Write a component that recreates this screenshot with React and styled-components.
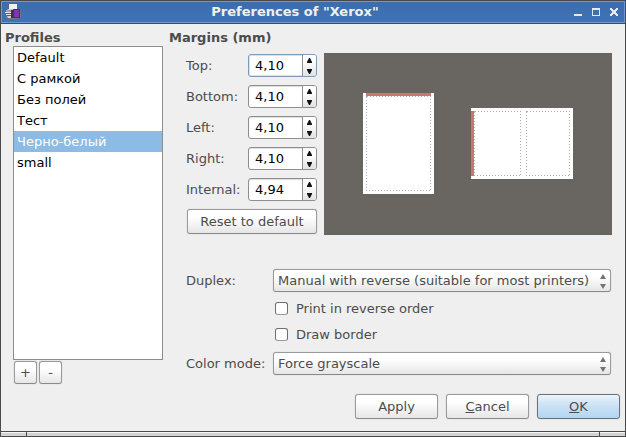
import React, { useState } from "react";
import styled, { createGlobalStyle, css } from "styled-components";

const GlobalStyle = createGlobalStyle`
  *, *::before, *::after { box-sizing: border-box; }
  body { margin: 0; }
  body, button, input, select {
    font-family: "DejaVu Sans", sans-serif;
    font-size: 13px;
    color: #4c4c4c;
  }
  button, input, select { margin: 0; padding: 0; }
`;

const Window = styled.div`
  display: flex;
  flex-direction: column;
  min-height: 100vh;
  background: #efefef;
  border: solid #4a4a4a;
  border-width: 0 1px;
`;

const TitleBar = styled.header`
  display: flex;
  align-items: center;
  height: 24px;
  padding: 0 2px 0 4px;
  background: linear-gradient(#3e6ca9, #4073ba);
  border: 1px solid #48494d;
  border-width: 1px 0;
  box-shadow: inset 0 0 0 1px #6b9bd0;

  & > svg { flex: none; }
`;

const Title = styled.h1`
  flex: 1;
  margin: 0;
  text-align: center;
  font-size: 13px;
  line-height: 16px;
  color: #f0f0f0;
`;

const WindowButton = styled.button`
  display: grid;
  place-items: center;
  width: 18px;
  height: 20px;
  border: 0;
  background: none;
`;

const Body = styled.main`
  flex: 1;
  padding: 5px 5px 12px 4px;
`;

const Columns = styled.div`
  display: grid;
  grid-template-columns: 158px 1fr;
  column-gap: 6px;
  padding-right: 8px;
`;

const Column = styled.section`
  display: flex;
  flex-direction: column;
`;

const Heading = styled.h2`
  margin: 0;
  font-size: 13px;
  line-height: 17px;
`;

const ProfileList = styled.ul`
  flex: 1;
  min-height: 314px;
  margin: 0 0 1px 8px;
  padding: 0;
  list-style: none;
  background: #fff;
  border: 1px solid #8e8e8e;
`;

const ProfileItem = styled.button`
  display: block;
  width: 100%;
  height: 21px;
  padding: 0 3px;
  border: 0;
  text-align: left;
  color: ${(p) => (p.$selected ? "#fff" : "#000")};
  background: ${(p) => (p.$selected ? "#8cbbe5" : "transparent")};
`;

const raised = css`
  border: 1px solid #9a9a9a;
  border-bottom-color: #8a8a8a;
  border-radius: 3px;
  background: linear-gradient(#fff 30%, #e6e6e6);
  box-shadow: 0 0 1px #aaa;
`;

const ListTools = styled.div`
  display: flex;
  gap: 2px;
  padding-left: 9px;
`;

const SquareButton = styled.button`
  ${raised}
  width: 23px;
  height: 23px;
`;

const PushButton = styled.button`
  ${raised}
  min-width: 83px;
  height: 25px;
  ${(p) =>
    p.$primary &&
    css`
      border-color: #66727e;
      background: linear-gradient(#eaf4fc, #cbe2f6 45%, #b3d5f1);
    `}
`;

const MarginsPane = styled.div`
  display: flex;
  gap: 7px;
  padding: 7px 0 0 17px;
`;

const MarginFields = styled.div`
  display: grid;
  grid-template-columns: 62px 69px;
  row-gap: 8px;
  align-items: center;
  padding: 1px 0;

  & > button {
    grid-column: 1 / -1;
    justify-self: end;
    min-width: 130px;
  }
`;

const Label = styled.label`
  line-height: 16px;
  white-space: nowrap;
`;

const Spin = styled.div`
  display: flex;
  height: 23px;
  overflow: hidden;
  border: 1px solid ${(p) => (p.$active ? "#7f9bb9" : "#8e8e8e")};
  border-radius: 3px;
  background: #fff;
  box-shadow: ${(p) => (p.$active ? "inset 0 0 0 1px #d3e3f3" : "inset 0 1px 1px #ddd")};
`;

const SpinInput = styled.input`
  flex: 1;
  min-width: 0;
  padding-left: 6px;
  border: 0;
  outline: 0;
  color: #000;
  background: transparent;
`;

const SpinArrows = styled.div`
  display: grid;
  grid-template-rows: 10px 9px;
  row-gap: 2px;
  width: 14px;
  border-left: 1px solid #8e8e8e;
  background: linear-gradient(#fff 30%, #e2e2e2);
`;

const ArrowButton = styled.button`
  display: grid;
  place-items: center;
  border: 0;
  background: none;
`;

const Preview = styled.div`
  flex: 1;
  display: flex;
  align-items: center;
  justify-content: center;
  gap: 37px;
  padding-bottom: 1px;
  background: #696561;
`;

const Options = styled.div`
  display: grid;
  grid-template-columns: 87px 1fr;
  align-items: center;
  padding: 34px 1px 0 17px;
`;

const Checks = styled.div`
  grid-column: 2;
  padding: 3px 2px 5px;
`;

const CheckLabel = styled.label`
  display: flex;
  align-items: center;
  gap: 8px;
  height: 26px;
`;

const CheckBox = styled.input`
  appearance: none;
  width: 13px;
  height: 13px;
  border: 1px solid #6e6e6e;
  border-bottom-color: #999;
  border-radius: 3px;
  background: #fff;

  &:checked { background: #8cbbe5; }
`;

const SelectFrame = styled.div`
  position: relative;
  display: grid;

  svg {
    position: absolute;
    right: 5px;
    top: 4px;
    pointer-events: none;
  }
`;

const Select = styled.select`
  ${raised}
  appearance: none;
  width: 100%;
  height: 23px;
  padding: 0 18px 0 4px;
`;

const Actions = styled.footer`
  display: flex;
  justify-content: flex-end;
  gap: 8px;
  padding-top: 10px;
`;

const ResizeBar = styled.div`
  display: grid;
  grid-template-columns: 25px 1fr 26px;
  height: 6px;
  border: solid #4a4a4a;
  border-width: 1px 0;
`;

const ResizePart = styled.div`
  background: linear-gradient(#f4f4f4 25%, #d2d2d2 25%);

  & + & { border-left: 1px solid #4a4a4a; }
`;

function PrinterIcon() {
  return (
    <svg width="16" height="16" viewBox="0 0 16 16" aria-hidden="true">
      <path d="M1 6l2-1h11l2 2v6l-2 2H3l-2-2z" fill="#77727b" />
      <path d="M4 0h8v5H4z" fill="#f1f1f1" />
      <path d="M3 5h9l1 1H2z" fill="#c9c9cc" />
      <path d="M1 6h5v2H1z" fill="#a5a2a8" />
      <path d="M0 8h6v1H0zM1 10h5v1H1z" fill="#e8e8e8" />
      <path d="M1 9h5v1H1zM2 11h4v1H2z" fill="#5f5a64" />
      <path d="M2 12h5v2H3z" fill="#d0d0d0" />
      <path d="M6 6h2v8H6z" fill="#3a3540" />
      <path d="M8 5h7v9H8z" fill="#55267a" />
      <path d="M9 6h5v7H9z" fill="#7e35ae" />
    </svg>
  );
}

function UpArrow() {
  return (
    <svg width="5" height="5" viewBox="0 0 5 5" aria-hidden="true">
      <path d="M2 0h1l2 4v1H0V4z" fill="#111" />
    </svg>
  );
}

function DownArrow() {
  return (
    <svg width="5" height="5" viewBox="0 0 5 5" aria-hidden="true">
      <path d="M0 0h5v1L3 5H2L0 1z" fill="#111" />
    </svg>
  );
}

function SelectArrows() {
  return (
    <svg width="6" height="16" viewBox="0 0 6 16" aria-hidden="true">
      <path d="M3 1l3 5H0zM0 11h6l-3 5z" fill="#737373" />
    </svg>
  );
}

function DottedBox({ x, y, width, height }) {
  return (
    <rect x={x + 0.5} y={y + 0.5} width={width - 1} height={height - 1}
      fill="none" stroke="#b0b0b0" strokeDasharray="1 2" shapeRendering="crispEdges" />
  );
}

function PortraitPage() {
  return (
    <svg width="71" height="101" viewBox="0 0 71 101" role="img" aria-label="Single page">
      <rect width="71" height="101" fill="#fff" />
      <DottedBox x={3} y={3} width={65} height={95} />
      <rect x="3" width="65" height="3" fill="#cd7371" />
    </svg>
  );
}

function LandscapePage() {
  return (
    <svg width="102" height="71" viewBox="0 0 102 71" role="img" aria-label="Two pages per sheet">
      <rect width="102" height="71" fill="#fff" />
      <DottedBox x={3} y={3} width={47} height={65} />
      <DottedBox x={55} y={3} width={44} height={65} />
      <rect y="3" width="3" height="65" fill="#cd7371" />
    </svg>
  );
}

const profiles = ["Default", "С рамкой", "Без полей", "Тест", "Черно-белый", "small"];

const initialMargins = { Top: 410, Bottom: 410, Left: 410, Right: 410, Internal: 494 };

const format = (n) => (n / 100).toFixed(2).replace(".", ",");

function SpinField({ name, value, active, onChange }) {
  const id = `margin-${name.toLowerCase()}`;
  return (
    <>
      <Label htmlFor={id}>{name}:</Label>
      <Spin $active={active}>
        <SpinInput id={id} value={format(value)} readOnly />
        <SpinArrows>
          <ArrowButton aria-label={`Increase ${name}`} onClick={() => onChange(value + 10)}>
            <UpArrow />
          </ArrowButton>
          <ArrowButton aria-label={`Decrease ${name}`} onClick={() => onChange(Math.max(0, value - 10))}>
            <DownArrow />
          </ArrowButton>
        </SpinArrows>
      </Spin>
    </>
  );
}

export default function App() {
  const [selected, setSelected] = useState("Черно-белый");
  const [margins, setMargins] = useState(initialMargins);

  return (
    <>
      <GlobalStyle />
      <Window>
        <TitleBar>
          <PrinterIcon />
          <Title>Preferences of "Xerox"</Title>
          <WindowButton aria-label="Minimize">
            <svg width="8" height="8" viewBox="0 0 8 8"><path d="M0 6h8v2H0z" fill="#e6e8ec" /></svg>
          </WindowButton>
          <WindowButton aria-label="Maximize">
            <svg width="8" height="8" viewBox="0 0 8 8">
              <path d="M0 0h8v8H0zM1 2v5h6V2z" fill="#e6e8ec" fillRule="evenodd" />
            </svg>
          </WindowButton>
          <WindowButton aria-label="Close">
            <svg width="8" height="8" viewBox="0 0 8 8" shapeRendering="crispEdges">
              <path d="M0 0h2v1h1v1h2V1h1V0h2v2H7v1H6v2h1v1h1v2H6V7H5V6H3v1H2v1H0V6h1V5h1V3H1V2H0z" fill="#e6e8ec" />
            </svg>
          </WindowButton>
        </TitleBar>

        <Body>
          <Columns>
            <Column>
              <Heading>Profiles</Heading>
              <ProfileList role="listbox" aria-label="Profiles">
                {profiles.map((name) => (
                  <li key={name} role="presentation">
                    <ProfileItem role="option" aria-selected={name === selected}
                      $selected={name === selected} onClick={() => setSelected(name)}>
                      {name}
                    </ProfileItem>
                  </li>
                ))}
              </ProfileList>
              <ListTools>
                <SquareButton aria-label="Add profile">+</SquareButton>
                <SquareButton aria-label="Remove profile">-</SquareButton>
              </ListTools>
            </Column>

            <Column>
              <Heading>Margins (mm)</Heading>
              <MarginsPane>
                <MarginFields>
                  {Object.entries(margins).map(([name, value]) => (
                    <SpinField key={name} name={name} value={value} active={name === "Top"}
                      onChange={(next) => setMargins({ ...margins, [name]: next })} />
                  ))}
                  <PushButton onClick={() => setMargins(initialMargins)}>Reset to default</PushButton>
                </MarginFields>
                <Preview>
                  <PortraitPage />
                  <LandscapePage />
                </Preview>
              </MarginsPane>

              <Options>
                <Label htmlFor="duplex">Duplex:</Label>
                <SelectFrame>
                  <Select id="duplex">
                    <option>Manual with reverse (suitable for most printers)</option>
                  </Select>
                  <SelectArrows />
                </SelectFrame>
                <Checks>
                  <CheckLabel><CheckBox type="checkbox" />Print in reverse order</CheckLabel>
                  <CheckLabel><CheckBox type="checkbox" />Draw border</CheckLabel>
                </Checks>
                <Label htmlFor="color-mode">Color mode:</Label>
                <SelectFrame>
                  <Select id="color-mode">
                    <option>Force grayscale</option>
                  </Select>
                  <SelectArrows />
                </SelectFrame>
              </Options>
            </Column>
          </Columns>

          <Actions>
            <PushButton>Apply</PushButton>
            <PushButton><u>C</u>ancel</PushButton>
            <PushButton $primary><u>O</u>K</PushButton>
          </Actions>
        </Body>

        <ResizeBar>
          <ResizePart />
          <ResizePart />
          <ResizePart />
        </ResizeBar>
      </Window>
    </>
  );
}
